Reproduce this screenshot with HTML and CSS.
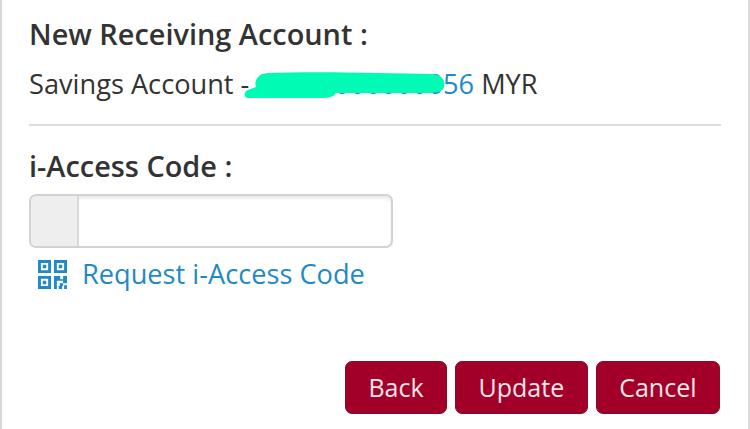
FILE: index.html
```html
<!DOCTYPE html>
<html lang="en">
<head>
    <meta charset="UTF-8">
    <meta name="viewport" content="width=device-width, initial-scale=1.0">
    <title>New Receiving Account</title>
    <link rel="stylesheet" href="styles.css">
</head>
<body>

    <div class="panel">
        <h2 class="label">New Receiving Account :</h2>
        <p class="account">
            Savings Account -
            <span class="account-wrap">
                <a class="account-no">00000000000056</a>
                <!-- smear over the account number -->
                <svg class="smear" viewBox="0 0 201 27" aria-hidden="true">
                    <path d="M4 26 C0 26 -1 20 4 18 L12 15 C10 8 14 2 24 1 C70 -1 140 1 189 2 C198 3 202 9 200 15 C199 20 193 21 181 21 L92 21 C90 25 84 26 78 26 Z" fill="#00fbb5"/>
                </svg>
            </span>
            MYR
        </p>
        <hr class="divider">

        <h2 class="label code-label">i-Access Code :</h2>
        <div class="code-input">
            <span class="addon"></span>
            <input type="password" class="code-field">
        </div>
        <a class="request-link">
            <svg class="qr" viewBox="0 0 30 30" aria-hidden="true">
                <path fill-rule="evenodd" fill="#1f8ac5" d="M0 0H13.5V13.5H0ZM3 3V10.5H10.5V3ZM5 5H8.5V8.5H5ZM16.5 0H30V13.5H16.5ZM19.5 3V10.5H27V3ZM21.5 5H25V8.5H21.5ZM0 16.5H13.5V30H0ZM3 19.5V27H10.5V19.5ZM5 21.5H8.5V25H5ZM16.5 16.5H23V20H26V16.5H30V24H26V21.5H19.5V30H16.5ZM22.5 24H26V27H22.5ZM21.5 27H25V30H21.5ZM27 26H30V30H27Z"/>
            </svg>
            Request i-Access Code
        </a>

        <div class="actions">
            <button class="btn">Back</button>
            <button class="btn">Update</button>
            <button class="btn">Cancel</button>
        </div>
    </div>

</body>
</html>
```

FILE: styles.css
```css
body {
    margin: 0;
    padding: 0;
    background-color: #fff;
    font-family: "Open Sans", sans-serif;
    color: #333;
}
.panel {
    height: 429px;
    box-sizing: border-box;
    padding: 16px 27px 0 27px;
    border-left: 2px solid #d8d8d8;
    border-right: 2px solid #dcdcdc;
    display: flex;
    flex-direction: column;
}
.label {
    margin: 0;
    font-size: 28.9px;
    line-height: 36px;
    font-weight: 600;
}
.account {
    margin: 14px 0 0;
    font-size: 27.2px;
    line-height: 36px;
    white-space: nowrap;
}
.account-wrap {
    position: relative;
}
.account-no {
    color: #1f8ac5;
}
.smear {
    position: absolute;
    left: -12px;
    top: 7px;
    width: 201px;
    height: 27px;
}
.divider {
    margin: 22px 0 0;
    border: none;
    border-top: 2px solid #dcdcdc;
}
.code-label {
    margin-top: 22px;
}
.code-input {
    display: flex;
    width: 364px;
    height: 54px;
    margin-top: 10px;
    box-sizing: border-box;
    border: 2px solid #d2d2d2;
    border-radius: 7px;
    overflow: hidden;
    box-shadow: inset 0 3px 3px rgba(0, 0, 0, 0.08);
}
.addon {
    width: 46px;
    background-color: #eee;
    border-right: 2px solid #d8d8d8;
}
.code-field {
    flex: 1;
    border: none;
    background: transparent;
    outline: none;
}
.request-link {
    display: flex;
    align-items: center;
    gap: 15px;
    margin: 7px 0 0 9px;
    font-size: 27.2px;
    line-height: 38px;
    color: #1f8ac5;
}
.qr {
    width: 29px;
    height: 29px;
}
.actions {
    display: flex;
    justify-content: flex-end;
    gap: 8px;
    margin: 68px 1px 0 0;
}
.btn {
    height: 53px;
    padding: 0 22.5px 2px;
    border: 1px solid #8d0a26;
    border-radius: 7px;
    background-color: #a30029;
    color: #f6e6e9;
    font-family: "Open Sans", sans-serif;
    font-size: 25px;
}
```
